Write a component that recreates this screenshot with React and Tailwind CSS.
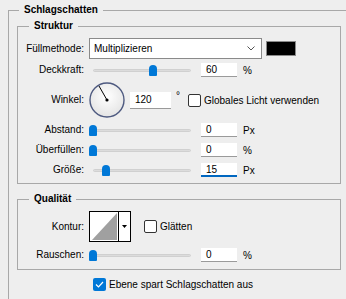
import React from 'react';

const Thumb = ({ left }) => (
  <div className="absolute top-[2px] w-[8px] h-[11px] bg-[#0078d7] rounded-t-[4px] rounded-b-[1px]" style={{ left }} />
);

const Slider = ({ pos }) => (
  <div className="relative w-[104px] h-[14px]">
    <div className="absolute left-[4px] top-[6px] w-[98px] h-[3px] rounded-full bg-[#dcdcdc] border border-[#d0d0d0]" />
    <Thumb left={pos} />
  </div>
);

const Field = ({ value, focused, w = 'w-[36px]', h = 'h-[14px]' }) => (
  <div
    className={`${w} ${h} bg-white pl-[5px] flex items-center ${
      focused ? 'border-b-2 border-[#0067c0]' : 'border-b border-[#9a9a9a]'
    }`}
  >
    {value}
  </div>
);

const Label = ({ children }) => <div className="w-[66px] text-right pr-[0px] leading-[14px]">{children}</div>;

const SliderRow = ({ label, pos, value, unit, focused, mt }) => (
  <div className={`flex items-center h-[14px] ${mt}`}>
    <Label>{label}</Label>
    <div className="ml-[5px]">
      <Slider pos={pos} />
    </div>
    <div className="ml-[8px]">
      <Field value={value} focused={focused} />
    </div>
    <div className="ml-[6px]">{unit}</div>
  </div>
);

const Checkbox = ({ checked }) =>
  checked ? (
    <div className="w-[13px] h-[13px] rounded-[2px] bg-[#0078d7] flex items-center justify-center">
      <svg width="9" height="7" viewBox="0 0 9 7">
        <path d="M1 3.5 L3.5 6 L8 1" stroke="white" strokeWidth="1.2" fill="none" />
      </svg>
    </div>
  ) : (
    <div className="w-[13px] h-[13px] rounded-[2px] bg-white border border-[#333333]" />
  );

export default function App() {
  return (
    <div
      className="w-[346px] h-[299px] overflow-hidden bg-[#eeeeee] text-[10px] text-black pt-[3px]"
      style={{ fontFamily: '"Liberation Sans", Arial, sans-serif' }}
    >
      <fieldset className="ml-[8px] w-[360px] h-[320px] border border-[#a8a8a8] p-0 m-0">
        <legend className="ml-[10px] px-[5px] font-bold leading-[14px]">Schlagschatten</legend>

        <fieldset className="ml-[8px] mt-[2px] w-[324px] border border-[#a8a8a8] p-0 pb-[6px]">
          <legend className="ml-[11px] px-[5px] font-bold leading-[14px]">Struktur</legend>

          <div className="flex items-center h-[21px] mt-[5px]">
            <Label>Füllmethode:</Label>
            <div className="ml-[5px] w-[173px] h-[21px] bg-white border border-[#8a8a8a] flex items-center pl-[4px] pr-[6px] justify-between">
              <span>Multiplizieren</span>
              <svg width="8" height="5" viewBox="0 0 8 5">
                <path d="M0.5 0.5 L4 4 L7.5 0.5" stroke="#555" strokeWidth="1" fill="none" />
              </svg>
            </div>
            <div className="ml-[4px] w-[30px] h-[15px] bg-black border border-[#8a8a8a]" />
          </div>

          <SliderRow label="Deckkraft:" pos={60} value="60" unit="%" mt="mt-[4px]" />

          <div className="flex items-center h-[36px] mt-[5px]">
            <Label>Winkel:</Label>
            <svg className="ml-[5px]" width="36" height="36" viewBox="0 0 36 36">
              <defs>
                <radialGradient id="dial" cx="50%" cy="40%" r="60%">
                  <stop offset="0%" stopColor="#ffffff" />
                  <stop offset="100%" stopColor="#e4e4e4" />
                </radialGradient>
              </defs>
              <circle cx="18" cy="18" r="17" fill="url(#dial)" stroke="#4e5a80" strokeWidth="1.4" />
              <line x1="18" y1="18" x2="10" y2="4" stroke="black" strokeWidth="1" />
              <circle cx="18" cy="18" r="1.6" fill="black" />
            </svg>
            <div className="ml-[5px]">
              <Field value="120" w="w-[41px]" h="h-[17px]" />
            </div>
            <div className="ml-[5px] self-start mt-[9px] leading-[10px]">°</div>
            <div className="ml-[8px] flex items-center">
              <Checkbox />
              <span className="ml-[3px]">Globales Licht verwenden</span>
            </div>
          </div>

          <SliderRow label="Abstand:" pos={0} value="0" unit="Px" mt="mt-[5px]" />
          <SliderRow label="Überfüllen:" pos={0} value="0" unit="%" mt="mt-[6px]" />
          <SliderRow label="Größe:" pos={13} value="15" unit="Px" focused mt="mt-[6px]" />
        </fieldset>

        <fieldset className="ml-[8px] mt-[8px] w-[324px] border border-[#a8a8a8] p-0 pb-[7px]">
          <legend className="ml-[11px] px-[5px] font-bold leading-[14px]">Qualität</legend>

          <div className="flex items-center h-[31px] mt-[5px]">
            <Label>Kontur:</Label>
            <svg className="ml-[5px]" width="42" height="31" viewBox="0 0 42 31">
              <rect x="0.5" y="0.5" width="41" height="30" fill="white" stroke="black" />
              <polygon points="3,29 28,2 28,29" fill="#a0a0a0" />
              <line x1="29.5" y1="0" x2="29.5" y2="31" stroke="black" />
              <polygon points="33,14 38,14 35.5,17" fill="black" />
            </svg>
            <div className="ml-[13px] flex items-center">
              <Checkbox />
              <span className="ml-[3px]">Glätten</span>
            </div>
          </div>

          <SliderRow label="Rauschen:" pos={0} value="0" unit="%" mt="mt-[6px]" />
        </fieldset>

        <div className="flex items-center mt-[7px] ml-[84px]">
          <Checkbox checked />
          <span className="ml-[3px]">Ebene spart Schlagschatten aus</span>
        </div>
      </fieldset>
    </div>
  );
}
